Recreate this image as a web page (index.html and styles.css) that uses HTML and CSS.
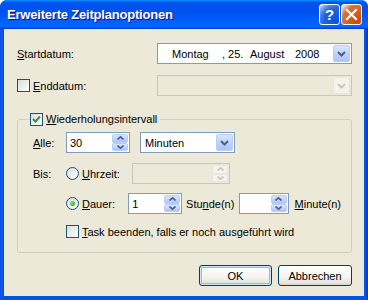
FILE: index.html
```html
<!DOCTYPE html>
<html lang="de">
<head>
    <meta charset="UTF-8">
    <meta name="viewport" content="width=device-width, initial-scale=1.0">
    <title>Erweiterte Zeitplanoptionen</title>
    <link rel="stylesheet" href="styles.css">
</head>
<body>
    <div class="window">
        <div class="titlebar">
            <span class="title">Erweiterte Zeitplanoptionen</span>
            <div class="caption-btns">
                <button class="cap help">?</button>
                <button class="cap close">
                    <svg width="13" height="13" viewBox="0 0 13 13"><path d="M2 2 L11 11 M11 2 L2 11" stroke="#fff" stroke-width="2.2" stroke-linecap="square"/></svg>
                </button>
            </div>
        </div>
        <div class="client">
            <div class="row">
                <label class="lbl-wide"><u>S</u>tartdatum:</label>
                <div class="combo date">
                    <span class="combo-text"><span class="d-day">Montag</span><span class="d-comma">, 25.</span><span class="d-month">August</span><span>2008</span></span>
                    <span class="drop"><svg width="9" height="6" viewBox="0 0 9 6"><path d="M1 1 L4.5 4.5 L8 1" fill="none" stroke="#4d6185" stroke-width="2"/></svg></span>
                </div>
            </div>
            <div class="row row-end">
                <span class="chk"></span>
                <label class="lbl-chk"><u>E</u>nddatum:</label>
                <div class="combo date disabled">
                    <span class="combo-text"></span>
                    <span class="drop"><svg width="9" height="6" viewBox="0 0 9 6"><path d="M1 1 L4.5 4.5 L8 1" fill="none" stroke="#c9c7ba" stroke-width="2"/></svg></span>
                </div>
            </div>

            <fieldset class="group">
                <legend><span class="chk checked"><svg width="11" height="11" viewBox="0 0 11 11"><path d="M2 5 L4.5 7.5 L9 2.5" fill="none" stroke="#21a121" stroke-width="2"/></svg></span><span><u>W</u>iederholungsintervall</span></legend>

                <div class="g-row">
                    <label class="g-lbl"><u>A</u>lle:</label>
                    <div class="spin w-alle">
                        <span class="spin-text">30</span>
                        <span class="spin-btns">
                            <span class="sb"><svg width="7" height="4" viewBox="0 0 7 4"><path d="M0.5 3.5 L3.5 0.8 L6.5 3.5" fill="none" stroke="#4d6185" stroke-width="1.6"/></svg></span>
                            <span class="sb"><svg width="7" height="4" viewBox="0 0 7 4"><path d="M0.5 0.5 L3.5 3.2 L6.5 0.5" fill="none" stroke="#4d6185" stroke-width="1.6"/></svg></span>
                        </span>
                    </div>
                    <div class="combo w-unit">
                        <span class="combo-text">Minuten</span>
                        <span class="drop"><svg width="9" height="6" viewBox="0 0 9 6"><path d="M1 1 L4.5 4.5 L8 1" fill="none" stroke="#4d6185" stroke-width="2"/></svg></span>
                    </div>
                </div>

                <div class="g-row row-bis">
                    <label class="g-lbl">Bis:</label>
                    <span class="opt"><span class="radio"></span><span><u>U</u>hrzeit:</span></span>
                    <div class="spin w-time disabled">
                        <span class="spin-text"></span>
                        <span class="spin-btns">
                            <span class="sb"><svg width="7" height="4" viewBox="0 0 7 4"><path d="M0.5 3.5 L3.5 0.8 L6.5 3.5" fill="none" stroke="#c9c7ba" stroke-width="1.6"/></svg></span>
                            <span class="sb"><svg width="7" height="4" viewBox="0 0 7 4"><path d="M0.5 0.5 L3.5 3.2 L6.5 0.5" fill="none" stroke="#c9c7ba" stroke-width="1.6"/></svg></span>
                        </span>
                    </div>
                </div>

                <div class="g-row row-dauer">
                    <span class="g-lbl"></span>
                    <span class="opt"><span class="radio checked"></span><span><u>D</u>auer:</span></span>
                    <div class="spin w-hours">
                        <span class="spin-text">1</span>
                        <span class="spin-btns">
                            <span class="sb"><svg width="7" height="4" viewBox="0 0 7 4"><path d="M0.5 3.5 L3.5 0.8 L6.5 3.5" fill="none" stroke="#4d6185" stroke-width="1.6"/></svg></span>
                            <span class="sb"><svg width="7" height="4" viewBox="0 0 7 4"><path d="M0.5 0.5 L3.5 3.2 L6.5 0.5" fill="none" stroke="#4d6185" stroke-width="1.6"/></svg></span>
                        </span>
                    </div>
                    <span class="unit-hours">Stu<u>n</u>de(n)</span>
                    <div class="spin w-mins">
                        <span class="spin-text"></span>
                        <span class="spin-btns">
                            <span class="sb"><svg width="7" height="4" viewBox="0 0 7 4"><path d="M0.5 3.5 L3.5 0.8 L6.5 3.5" fill="none" stroke="#4d6185" stroke-width="1.6"/></svg></span>
                            <span class="sb"><svg width="7" height="4" viewBox="0 0 7 4"><path d="M0.5 0.5 L3.5 3.2 L6.5 0.5" fill="none" stroke="#4d6185" stroke-width="1.6"/></svg></span>
                        </span>
                    </div>
                    <span class="unit-mins"><u>M</u>inute(n)</span>
                </div>

                <div class="g-row row-task">
                    <span class="g-lbl"></span>
                    <span class="chk"></span>
                    <label class="lbl-chk"><u>T</u>ask beenden, falls er noch ausgeführt wird</label>
                </div>
            </fieldset>

            <div class="buttons">
                <button class="btn default">OK</button>
                <button class="btn">Abbrechen</button>
            </div>
        </div>
    </div>
</body>
</html>
```

FILE: styles.css
```css
* {
    box-sizing: border-box;
}
body {
    margin: 0;
    padding: 0;
    background: #fff;
    font-family: "Liberation Sans", Arial, sans-serif;
    font-size: 11px;
    color: #000;
}
u {
    text-decoration: underline;
    text-underline-offset: 1px;
}

.window {
    width: 368px;
    height: 300px;
    display: flex;
    flex-direction: column;
    background: linear-gradient(90deg, #0831d9 0, #166aee 1px, #0055e5 2px, #0055e5 366px, #0831d9 367px);
    border-radius: 7px 7px 0 0;
    overflow: hidden;
}

/* title bar */
.titlebar {
    height: 29px;
    flex: none;
    display: flex;
    align-items: center;
    justify-content: space-between;
    padding: 0 6px 1px 7px;
    background: linear-gradient(180deg, #0997ff, #0053ee 8%, #0050ee 40%, #0066ff 88%, #0066ff 93%, #005bff 95%, #003dd7 96%, #003dd7);
}
.title {
    color: #fff;
    font-weight: bold;
    font-size: 13px;
    letter-spacing: -0.2px;
    text-shadow: 1px 1px #0f1089;
}
.caption-btns {
    display: flex;
    gap: 1px;
}
.cap {
    width: 21px;
    height: 21px;
    padding: 0;
    border: 1px solid #fff;
    border-radius: 3px;
    display: flex;
    justify-content: center;
    align-items: center;
    color: #fff;
    font-family: "Liberation Sans", Arial, sans-serif;
    font-weight: bold;
    font-size: 15px;
}
.help {
    background: radial-gradient(circle at 90% 90%, #0054e9 0, #2263d5 55%, #4479e4 70%, #a3bbec 90%, #fff 100%);
}
.close {
    background: radial-gradient(circle at 90% 90%, #cc4600 0, #dc6527 55%, #cd7546 70%, #ffccb2 90%, #fff 100%);
}

/* dialog body */
.client {
    flex: 1;
    margin: 0 4px 4px;
    background: #ece9d8;
    padding: 14px 12px 0 13px;
    display: flex;
    flex-direction: column;
}
.row {
    display: flex;
    align-items: center;
    height: 21px;
}
.row-end {
    margin-top: 11px;
}
.lbl-wide {
    width: 140px;
}
.lbl-chk {
    margin-left: 3px;
}
.row-end .lbl-chk {
    width: 124px;
}

/* combobox */
.combo {
    height: 21px;
    display: flex;
    align-items: stretch;
    border: 1px solid #7f9db9;
    background: #fff;
}
.combo-text {
    flex: 1;
    display: flex;
    align-items: center;
    padding-left: 4px;
}
.combo.date {
    width: 195px;
}
.combo.date .combo-text {
    padding-left: 14px;
}
.d-day {
    width: 50px;
}
.d-comma {
    width: 28px;
}
.d-month {
    width: 45px;
}
.drop {
    width: 17px;
    margin: 1px;
    display: flex;
    justify-content: center;
    align-items: center;
    border: 1px solid #b9cdf8;
    border-radius: 2px;
    background: linear-gradient(180deg, #dbe6fd 0, #c0d2fa 50%, #adc4f6 100%);
}
.combo.disabled {
    border-color: #c9c7ba;
    background: #ece9d8;
}
.combo.disabled .drop {
    border-color: #e8e7de;
    background: #f4f3ee;
}
.w-unit {
    width: 95px;
    margin-left: 10px;
}

/* checkbox & radio */
.chk {
    width: 13px;
    height: 13px;
    flex: none;
    border: 1px solid #1c5180;
    background: linear-gradient(135deg, #dcdcd7, #fff);
    display: inline-flex;
    justify-content: center;
    align-items: center;
}
.radio {
    width: 13px;
    height: 13px;
    flex: none;
    border: 1px solid #1c5180;
    border-radius: 50%;
    background: linear-gradient(135deg, #dcdcd7, #fff);
    display: inline-flex;
    justify-content: center;
    align-items: center;
    margin-right: 3px;
}
.radio.checked::after {
    content: "";
    width: 5px;
    height: 5px;
    border-radius: 50%;
    background: radial-gradient(circle at 35% 35%, #7de37a, #21a121);
}

/* group box */
.group {
    margin: 16px 0 0;
    padding: 6px 10px 10px 15px;
    border: 1px solid #d0d0bf;
    border-radius: 3px;
    min-width: 0;
}
.group legend {
    display: flex;
    align-items: center;
    gap: 3px;
    padding: 0 3px 0 0;
    margin-left: -3px;
    height: 14px;
}
.g-row {
    display: flex;
    align-items: center;
    height: 21px;
}
.g-lbl {
    width: 33px;
    flex: none;
}
.row-bis {
    margin-top: 10px;
}
.row-dauer {
    margin-top: 9px;
}
.row-task {
    margin-top: 7px;
}
.opt {
    width: 66px;
    display: flex;
    align-items: center;
}

/* spin field */
.spin {
    height: 21px;
    display: flex;
    border: 1px solid #7f9db9;
    background: #fff;
}
.spin-text {
    flex: 1;
    display: flex;
    align-items: center;
    padding-left: 3px;
}
.spin-btns {
    width: 16px;
    margin: 1px 1px 1px 0;
    display: flex;
    flex-direction: column;
}
.sb {
    flex: 1;
    display: flex;
    justify-content: center;
    align-items: center;
    border: 1px solid #b9cdf8;
    border-radius: 2px;
    background: linear-gradient(180deg, #dbe6fd 0, #c0d2fa 60%, #adc4f6 100%);
}
.spin.disabled {
    border-color: #c9c7ba;
    background: #ece9d8;
}
.spin.disabled .sb {
    border-color: #e8e7de;
    background: #f4f3ee;
}
.w-alle {
    width: 64px;
}
.w-time {
    width: 98px;
}
.w-hours {
    width: 57px;
}
.w-mins {
    width: 52px;
}
.unit-hours {
    margin: 0 5px 0 4px;
}
.unit-mins {
    margin-left: 6px;
}

/* buttons */
.buttons {
    margin-top: 12px;
    display: flex;
    justify-content: flex-end;
    gap: 6px;
}
.btn {
    width: 74px;
    height: 21px;
    padding: 0;
    border: 1px solid #003c74;
    border-radius: 3px;
    background: linear-gradient(180deg, #fff 0, #f5f4ef 60%, #e3e2da 90%, #d6d0c5 100%);
    font-family: "Liberation Sans", Arial, sans-serif;
    font-size: 11px;
    color: #000;
}
.btn.default {
    width: 73px;
    box-shadow: inset 0 0 0 1px #cee7ff, inset 0 0 0 2px #98b8ea;
}
```
